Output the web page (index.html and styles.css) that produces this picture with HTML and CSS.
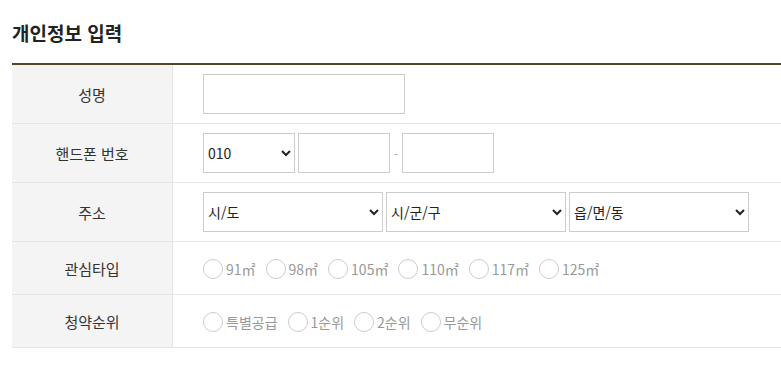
FILE: index.html
```html
<!DOCTYPE html>
<html lang="ko">
<head>
    <meta charset="UTF-8">
    <meta name="viewport" content="width=device-width, initial-scale=1.0">
    <title>개인정보 입력</title>
    <link rel="stylesheet" href="styles.css">
</head>
<body>
    <div class="container">
        <h2 class="title">개인정보 입력</h2>

        <table class="form-table">
            <tr>
                <th>성명</th>
                <td><input type="text" class="input-name"></td>
            </tr>
            <tr>
                <th>핸드폰 번호</th>
                <td>
                    <div class="field-row">
                        <select class="select-phone">
                            <option>010</option>
                            <option>011</option>
                            <option>016</option>
                        </select>
                        <input type="text" class="input-phone">
                        <span class="dash">-</span>
                        <input type="text" class="input-phone">
                    </div>
                </td>
            </tr>
            <tr>
                <th>주소</th>
                <td>
                    <div class="field-row">
                        <select class="select-addr"><option>시/도</option></select>
                        <select class="select-addr"><option>시/군/구</option></select>
                        <select class="select-addr"><option>읍/면/동</option></select>
                    </div>
                </td>
            </tr>
            <tr class="radio-row">
                <th>관심타입</th>
                <td>
                    <div class="field-row">
                        <label class="radio"><input type="radio" name="type">91㎡</label>
                        <label class="radio"><input type="radio" name="type">98㎡</label>
                        <label class="radio"><input type="radio" name="type">105㎡</label>
                        <label class="radio"><input type="radio" name="type">110㎡</label>
                        <label class="radio"><input type="radio" name="type">117㎡</label>
                        <label class="radio"><input type="radio" name="type">125㎡</label>
                    </div>
                </td>
            </tr>
            <tr class="radio-row">
                <th>청약순위</th>
                <td>
                    <div class="field-row">
                        <label class="radio"><input type="radio" name="rank">특별공급</label>
                        <label class="radio"><input type="radio" name="rank">1순위</label>
                        <label class="radio"><input type="radio" name="rank">2순위</label>
                        <label class="radio"><input type="radio" name="rank">무순위</label>
                    </div>
                </td>
            </tr>
        </table>
    </div>
</body>
</html>
```

FILE: styles.css
```css
body {
    margin: 0;
    font-family: 'Noto Sans CJK KR', 'Noto Sans', sans-serif;
    background-color: #fff;
    color: #333;
}
.container {
    padding-left: 12px;
}
.title {
    font-size: 19px;
    font-weight: bold;
    color: #222;
    margin: 20px 0 17px;
    line-height: 26px;
}
.form-table {
    width: 100%;
    border-collapse: collapse;
    border-top: 2px solid #51462c;
}
.form-table th {
    width: 160px;
    background-color: #f4f4f4;
    border-right: 1px solid #e5e5e5;
    border-bottom: 1px solid #e5e5e5;
    font-size: 15px;
    font-weight: normal;
    color: #333;
    text-align: center;
    padding: 0;
}
.form-table td {
    border-bottom: 1px solid #e5e5e5;
    padding: 9px 0 9px 30px;
    height: 40px;
}
.radio-row td {
    padding: 17px 0 15px 30px;
    height: 20px;
}
.field-row {
    display: flex;
    align-items: center;
    gap: 3px;
}
input[type="text"],
select {
    box-sizing: border-box;
    height: 40px;
    border: 1px solid #ccc;
    background-color: #fff;
    font-family: 'Noto Sans CJK KR', 'Noto Sans', sans-serif;
    font-size: 14px;
    color: #222;
    margin: 0;
    display: block;
}
.input-name {
    width: 202px;
}
.select-phone,
.input-phone {
    width: 92px;
}
.dash {
    font-size: 12px;
    color: #aaa;
    margin: 0 1px;
}
.select-addr {
    width: 180px;
}
.radio {
    display: flex;
    align-items: center;
    gap: 3px;
    margin-right: 7px;
    font-size: 14px;
    color: #999;
    cursor: pointer;
}
.radio input {
    appearance: none;
    -webkit-appearance: none;
    width: 20px;
    height: 20px;
    margin: 0;
    border: 1px solid #ccc;
    border-radius: 50%;
    background-color: #fff;
}
.radio input:checked {
    border: 6px solid #51462c;
}
```
